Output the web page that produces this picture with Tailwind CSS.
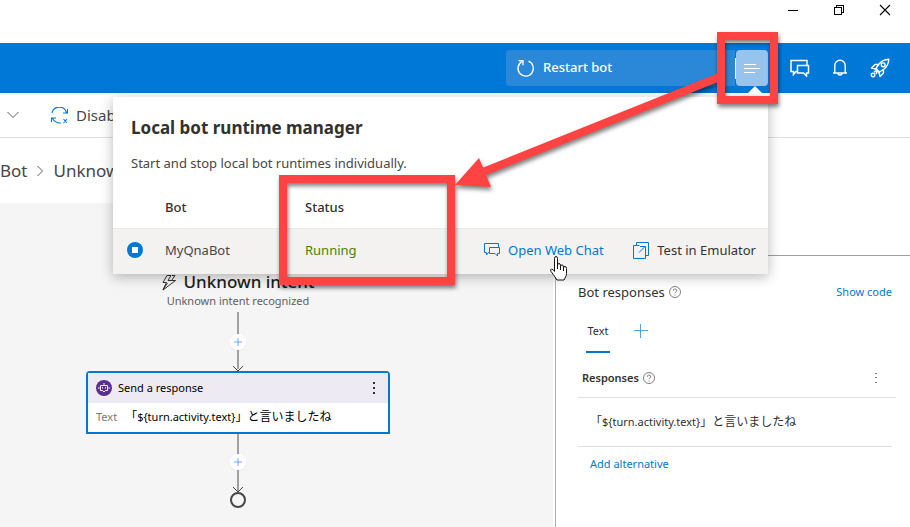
<!DOCTYPE html>
<html lang="en">
<head>
<meta charset="utf-8">
<meta name="viewport" content="width=device-width, initial-scale=1">
<title>Bot Composer</title>
<script src="https://cdn.jsdelivr.net/npm/@tailwindcss/browser@4"></script>
</head>
<body class="flex min-h-screen flex-col overflow-x-hidden bg-white font-['Noto_Sans','Noto_Sans_CJK_JP',sans-serif] text-[11px] text-[#323130]">

<!-- Window controls -->
<div class="flex h-[43px] items-start justify-end pr-0.5">
  <button aria-label="Minimize" class="flex h-5 w-[46px] items-center justify-center text-black"><svg width="12" height="12" fill="none" stroke="currentColor" shape-rendering="crispEdges"><path d="M1 6.5h10"/></svg></button>
  <button aria-label="Restore" class="flex h-5 w-[46px] items-center justify-center text-black"><svg width="12" height="12" fill="none" stroke="currentColor" shape-rendering="crispEdges"><path d="M1.5 3.5h7v7h-7zM3.5 3.500V1.500h7v7H8.500"/></svg></button>
  <button aria-label="Close" class="flex h-5 w-[46px] items-center justify-center text-black"><svg width="12" height="12" fill="none" stroke="currentColor" stroke-width="1.100"><path d="M1 1l10 10M11 1L1 11"/></svg></button>
</div>

<!-- Application header -->
<header class="relative z-10 flex h-[50px] items-center justify-end bg-[#0078d7] pr-2.5 text-white">
  <button class="flex h-9 w-[229px] items-center gap-2 rounded-l-sm bg-[#2b88d8] pl-2.5 text-[13px] font-medium">
    <svg width="19" height="19" viewBox="0 0 19 19" fill="none" stroke="currentColor" stroke-width="1.300"><path d="M12.500 2.200a7.700 7.700 0 1 1-6.500.4M2.500 1.700H7v4.500"/></svg>
    Restart bot
  </button>
  <span class="h-[21px] w-px bg-white"></span>
  <div class="relative mr-3">
    <button aria-label="Open local bot runtime manager" class="flex h-9 w-8 items-center justify-center rounded-sm bg-[#98c3ec]"><svg width="18" height="12" fill="none" stroke="currentColor" shape-rendering="crispEdges"><path d="M1 2.500h12M1 6.500h16M1 10.500h11"/></svg></button>
    <svg class="absolute top-9 right-1" width="18" height="12" fill="currentColor"><path d="M0 9L9 0l9 9v3H0z"/></svg>

    <section aria-label="Local bot runtime manager" class="absolute top-[47px] right-0 w-[655px] bg-white text-[13px] text-[#323130] shadow-[0_3px_12px_rgba(0,0,0,0.28)]">
      <div class="px-[18px] pt-[17px]">
        <h2 class="text-[17px] leading-7 font-bold">Local bot runtime manager</h2>
        <p class="mt-[11px] leading-5 text-[#484644]">Start and stop local bot runtimes individually.</p>
      </div>
      <table class="mt-3.5 w-full table-fixed text-left">
        <thead>
          <tr class="h-[41px]"><th class="w-[52px]"></th><th class="w-[140px] font-medium">Bot</th><th class="w-[178px] font-medium">Status</th><th></th></tr>
        </thead>
        <tbody>
          <tr class="h-[46px] border-t border-[#edebe9] bg-[#f3f2f1]">
            <td class="pb-0.5 pl-3.5"><button aria-label="Stop bot" class="flex size-4 items-center justify-center rounded-full bg-[#0078d4]"><span class="size-1.5 bg-white"></span></button></td>
            <td class="pb-0.5 text-[#484644]">MyQnaBot</td>
            <td class="pb-0.5 text-[#498205]">Running</td>
            <td class="pb-0.5">
              <div class="flex items-center justify-between pr-3 pl-px">
                <button class="flex items-center gap-2 text-[#0078d4]"><svg width="16" height="16" viewBox="0 0 16 16" fill="none" stroke="currentColor"><path d="M5.500 10.500h-1l-2 2.500v-2.500h-2v-9h14v3.500M5.500 5.500h10v6h-2v2.500L11 11.500H5.500z"/></svg>Open Web Chat</button>
                <button class="flex items-center gap-2"><svg class="text-[#0078d4]" width="16" height="17" viewBox="0 0 16 17" fill="none" stroke="currentColor"><path d="M3.500 3.500V.5h12v13h-3M6.500 3.500h-6v13h12v-8M6 10.500l6-6M7 4.500h5.500V10"/></svg>Test in Emulator</button>
              </div>
            </td>
          </tr>
        </tbody>
      </table>

      <!-- Callout frames, arrow and pointer; origin is 65px above the panel -->
      <svg class="pointer-events-none absolute -top-[65px] left-0 overflow-visible" width="665" height="260" fill="none" aria-hidden="true">
        <g class="drop-shadow-[1px_3px_2px_rgba(0,0,0,0.5)]">
          <path d="M608 4h53v64h-53z" stroke="#ff4343" stroke-width="8"/>
          <path d="M170 147h168v102H170z" stroke="#ff4343" stroke-width="8"/>
          <path d="M609 44L370 140" stroke="#ff4343" stroke-width="8"/>
          <path d="M342 153l24-27 12 29z" fill="#ff4343"/>
        </g>
        <path d="M441.500 226.500q0-2 1.500-2t1.500 2v7q0-2 1.500-2t1.500 2v1q0-1.500 1.500-1.500t1.500 2v1q0-1.500 1.500-1.500t1.500 2v5q0 2-1 3.500l-1.500 3h-7l-2-3q-2-3-4-5.500-1-2 .5-2.500 1.500 0 3 2.500zM444.500 233v4M447.500 234v4M450.500 236v3" fill="white" stroke="#111" stroke-linejoin="round"/>
      </svg>
    </section>
  </div>
  <button aria-label="Web chat" class="flex h-9 w-10 items-center justify-center"><svg width="20" height="18" viewBox="0 0 20 18" fill="none" stroke="currentColor" stroke-width="1.500"><path d="M7 12.500H6L3.500 15.500V12.500H1V1.500h16v4.500M7.500 6.500H18.500v7.500h-2V17l-3-3h-6z"/></svg></button>
  <button aria-label="Notifications" class="flex h-9 w-10 items-center justify-center"><svg width="16" height="18" viewBox="0 0 16 18" fill="none" stroke="currentColor" stroke-width="1.400"><path d="M1 14h14M2.800 14V6.500a5.200 5.200 0 0 1 10.400 0V14M6 14a2 2 0 0 0 4 0"/></svg></button>
  <button aria-label="Get started" class="flex h-9 w-10 items-center justify-center"><svg width="20" height="20" viewBox="0 0 20 20" fill="none" stroke="currentColor" stroke-width="1.400" stroke-linejoin="round"><path d="M18.800 1.200Q12.500 1.500 9 6l-3.500 5 3.500 3.500 5-3.500q4.500-3.500 4.800-9.800zM8.500 6.500H5L1.500 10l4 1M13.500 11.500V15L10 18.500l-1-4M6 10.500l3.500 3.500"/><circle cx="13.200" cy="6.800" r="1.900"/><circle cx="3" cy="17" r="1.800"/><path d="M4 14l2-1 1 1-1 2"/></svg></button>
</header>

<!-- Toolbar -->
<div class="flex h-[45px] items-center border-b border-[#e1dfdd] pl-[7px] text-[#484644]">
  <button aria-label="Expand" class="mr-8"><svg width="12" height="8" fill="none" stroke="#605e5c"><path d="M.5 1l5.500 5.500L11.500 1"/></svg></button>
  <button class="flex items-center gap-2 text-[15px]">
    <svg width="17" height="17" viewBox="0 0 17 17" fill="none" stroke="#0078d4" stroke-width="1.100"><path d="M1 6a7.500 7.500 0 0 1 14.500-.5M16.500 2v4h-4.500M.5 15v-4h4.500M1.500 11.500q3 5 8.500 4.500M12.500 12l3.500 4M16 12l-3.500 4"/></svg>
    Disable
  </button>
</div>

<!-- Breadcrumb -->
<nav aria-label="Breadcrumb" class="flex h-[65px] items-center gap-2.5 text-[17px] text-[#484644]">
  <a href="#">Bot</a>
  <svg width="6" height="12" fill="none" stroke="#605e5c"><path d="M.5 1l5 5-5 5"/></svg>
  <a href="#">Unknown</a>
</nav>

<main class="flex grow">
  <!-- Flow canvas -->
  <section aria-label="Dialog flow" class="grow bg-[#f5f5f5] pl-[86px]">
    <div class="flex w-[304px] flex-col items-center pt-[67px]">
      <h1 class="flex h-6 items-center gap-2 text-[17px] font-medium text-[#201f1e]">
        <svg width="14" height="17" viewBox="0 0 14 17" fill="none" stroke="currentColor" stroke-width=".9" stroke-linejoin="round"><path d="M5 1.500L1 8.500h3.500L1 15.500M5 1.500h4M13 1.500L9.500 6.500h4L1 16l4.500-7M9 1.500L6 6.500h3.500M13 1.500h-3"/></svg>
        Unknown intent
      </h1>
      <p class="leading-[14px] text-[#605e5c]">Unknown intent recognized</p>
      <div class="relative mt-1 h-[59px]">
        <svg width="18" height="59" fill="none"><path d="M9 0v57" stroke="#a0a0a0" stroke-width="2"/><path d="M4 54l5 5 5-5" stroke="#444"/></svg>
        <button aria-label="Add action before" class="absolute top-[22px] left-px flex size-4 items-center justify-center rounded-full bg-white shadow-xs"><svg width="8" height="8" stroke="#6ba5ff"><path d="M0 4h8M4 0v8"/></svg></button>
      </div>
      <article class="w-full rounded-t-sm border-2 border-[#0078d4] bg-white text-black">
        <header class="flex h-[30px] items-center gap-1.5 bg-[#eeeaf4] px-2">
          <svg width="16" height="16" viewBox="0 0 16 16" fill="none" stroke="white"><circle cx="8" cy="8" r="8" fill="#5c2e91" stroke="none"/><path d="M4.500 5.500h7v5h-2L8 12l-1.500-1.500h-2zM8 3v2.500M3 7v2M13 7v2M6.500 7v1.500M9.500 7v1.500" stroke-width=".9"/></svg>
          <h2 class="grow">Send a response</h2>
          <button aria-label="Action menu" class="flex w-3 justify-center"><svg width="2" height="12" fill="#323130"><path d="M0 0h2v2H0zM0 5h2v2H0zM0 10h2v2H0z"/></svg></button>
        </header>
        <p class="flex h-[29px] items-center gap-2 px-2 whitespace-nowrap"><span class="text-[#797775]">Text</span><span><span class="text-xs">「</span>${turn.activity.text}<span class="text-xs">」と言いましたね</span></span></p>
      </article>
      <div class="relative h-[58px]">
        <svg width="18" height="58" fill="none"><path d="M9 0v57" stroke="#a0a0a0" stroke-width="2"/><path d="M4 53l5 5 5-5" stroke="#444"/></svg>
        <button aria-label="Add action after" class="absolute top-5 left-px flex size-4 items-center justify-center rounded-full bg-white shadow-xs"><svg width="8" height="8" stroke="#6ba5ff"><path d="M0 4h8M4 0v8"/></svg></button>
      </div>
      <span class="size-4 rounded-full border-2 border-[#484644]"></span>
    </div>
  </section>

  <!-- Property panel -->
  <aside class="ml-0.5 w-[355px] shrink-0 border-l border-[#b3b0ad] pt-[52px]">
    <div class="border-t border-[#a19f9d] pr-3.5 pl-[22px]">
      <div class="flex items-center justify-between pt-[26px] pr-1 leading-5">
        <h2 class="flex items-center gap-1 text-[13px]">Bot responses
          <svg width="12" height="12" viewBox="0 0 12 12" fill="none" stroke="#605e5c"><circle cx="6" cy="6" r="5.500" stroke-width=".8"/><path d="M4.300 4.800a1.700 1.600 0 1 1 2.400 1.300Q6 6.500 6 7.200M6 8.400v1" stroke-width=".8"/></svg>
        </h2>
        <a href="#" class="text-[#0078d4]">Show code</a>
      </div>
      <div class="mt-5 flex items-start gap-6 pl-2" role="tablist">
        <button role="tab" aria-selected="true" class="h-[31px] w-6 border-b-2 border-[#0078d4] pb-3 leading-4">Text</button>
        <button aria-label="Add response type" class="pt-0.5"><svg width="14" height="14" fill="#4da3e4"><path d="M0 6h14v1H0zM6 0h1v14H6z"/></svg></button>
      </div>
      <div class="flex h-[45px] items-center justify-between border-b border-[#e1dfdd] pt-1.5 pr-[19px] pl-1">
        <h3 class="flex items-center gap-1 font-semibold">Responses
          <svg width="12" height="12" viewBox="0 0 12 12" fill="none" stroke="#605e5c"><circle cx="6" cy="6" r="5.500" stroke-width=".8"/><path d="M4.300 4.800a1.700 1.600 0 1 1 2.400 1.300Q6 6.500 6 7.200M6 8.400v1" stroke-width=".8"/></svg>
        </h3>
        <button aria-label="Responses menu"><svg width="2" height="12" fill="#797775"><path d="M0 1h2v1H0zM0 5h2v1H0zM0 10h2v1H0z"/></svg></button>
      </div>
      <p class="mr-1 flex h-[49px] items-center border-b border-[#e1dfdd] pl-3 whitespace-nowrap"><span><span class="text-xs">「</span>${turn.activity.text}<span class="text-xs">」と言いましたね</span></span></p>
      <button class="mt-[9px] ml-3 leading-4 text-[#0078d4]">Add alternative</button>
    </div>
  </aside>
</main>
</body>
</html>
